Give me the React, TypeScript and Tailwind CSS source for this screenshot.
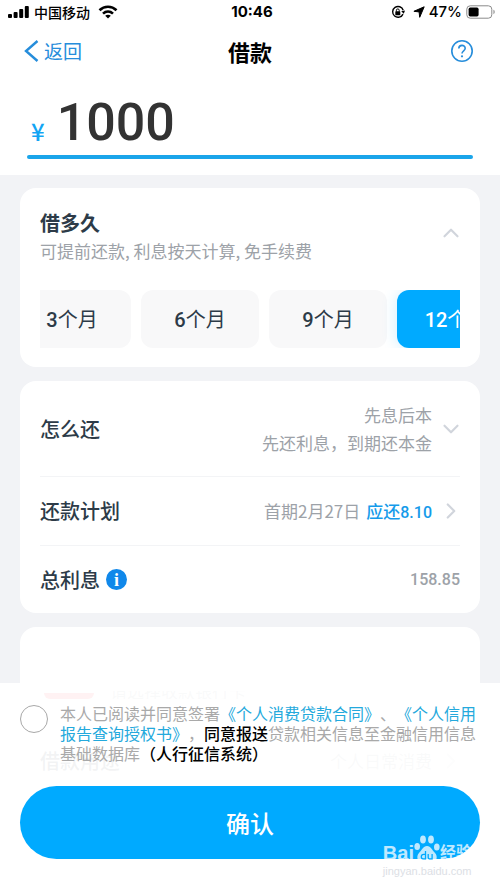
import React, { useState } from "react";
import { ChevronDown, ChevronRight, ChevronUp } from "lucide-react";

const terms = ["3", "6", "9", "12"];

function StatusBar() {
	return (
		<div className="flex h-6 items-center justify-between pl-2 pr-1 text-black">
			<div className="flex flex-1 items-center gap-1">
				<svg width="22" height="14" viewBox="0 0 22 14" fill="currentColor">
					<rect x="0" y="9" width="4" height="4" rx="1" />
					<rect x="5.6" y="7" width="4" height="6" rx="1" />
					<rect x="11.2" y="4" width="4" height="9" rx="1" />
					<rect x="16.8" y="1" width="4" height="12" rx="1" />
				</svg>
				<span className="text-sm font-medium">中国移动</span>
				<svg className="ml-1" width="20" height="14" viewBox="0 0 20 14" fill="none" stroke="currentColor" strokeWidth="2.6">
					<path d="M1.5 5.2C6.3.5 13.7.5 18.5 5.2" />
					<path d="M5 8.6c2.9-2.7 7.1-2.7 10 0" />
					<path d="M10 13.5 7.2 10.8c1.6-1.4 4-1.4 5.6 0z" fill="currentColor" stroke="none" />
				</svg>
			</div>
			<span className="font-[Inter] text-[15px] font-bold">10:46</span>
			<div className="flex flex-1 items-center justify-end gap-1">
				<svg className="mr-1" width="14" height="14" viewBox="0 0 14 14" fill="none" stroke="currentColor" strokeWidth="1.4">
					<path d="M12.2 5.2A5.4 5.4 0 1 0 12 9.1" />
					<path d="m10.2 6.3 2.6 2.4L14 5.4z" fill="currentColor" stroke="none" />
					<rect x="4.3" y="6.3" width="5" height="3.9" rx=".6" fill="currentColor" stroke="none" />
					<path d="M5.4 6.6V5.3a1.4 1.4 0 0 1 2.8 0v1.3" strokeWidth="1" />
				</svg>
				<svg width="12" height="12" viewBox="0 0 12 12" fill="currentColor" stroke="currentColor" strokeLinejoin="round">
					<path d="M11.2.8.9 5.3l5.2.6.6 5.4z" />
				</svg>
				<span className="font-[Inter] text-[15px] font-medium">47%</span>
				<svg width="30" height="14" viewBox="0 0 30 14">
					<rect x=".8" y=".8" width="25" height="12.4" rx="3.4" fill="none" stroke="#8b8b8b" />
					<rect x="2.6" y="2.6" width="10" height="8.8" rx="1.6" fill="#000" />
					<path d="M27.4 4.8c1.8.6 1.8 3.8 0 4.4z" fill="#999" />
				</svg>
			</div>
		</div>
	);
}

function Watermark() {
	return (
		<div className="pointer-events-none absolute bottom-[10px] right-7 font-['Liberation_Sans','Noto_Sans_CJK_SC',sans-serif] text-white opacity-75">
			<div className="flex items-end text-xl font-bold leading-5">
				<span>Bai</span>
				<svg width="26" height="28" viewBox="0 0 26 28" fill="currentColor">
					<ellipse cx="3.2" cy="11.5" rx="2.8" ry="3.6" />
					<ellipse cx="9" cy="4.6" rx="2.9" ry="4" />
					<ellipse cx="17" cy="4.6" rx="2.9" ry="4" />
					<ellipse cx="22.8" cy="12" rx="2.8" ry="3.6" />
					<path d="M13 11c-4 0-5 4-8 7s-2 9 3 9c2 0 3-.6 5-.6s3 .6 5 .6c5 0 6-6 3-9s-4-7-8-7z" />
					<g fill="none" stroke="#00aaff" strokeWidth="1.3">
						<path d="M11.5 16v8H9.6a2 2 0 0 1 0-4.6h1.9" />
						<path d="M14.2 19v3.6c0 .9.4 1.4 1.3 1.4h2.6v-5" />
					</g>
				</svg>
				<span className="text-base leading-5">经验</span>
			</div>
			<div className="text-[11px] leading-4 text-gray-300">jingyan.baidu.com</div>
		</div>
	);
}

export default function App() {
	const [term, setTerm] = useState("12");
	const [amount, setAmount] = useState("1000");
	const [agreed, setAgreed] = useState(false);

	return (
		<div className="relative h-screen overflow-hidden bg-[#f2f3f6] font-['Noto_Sans_CJK_SC',sans-serif] text-[#2d3b48]">
			{/* Header and amount */}
			<header className="bg-white">
				<StatusBar />
				<div className="flex h-[54px] items-center justify-between px-6 text-[#268ddb]">
					<button className="flex flex-1 items-center gap-1 text-[19px]">
						<svg width="16" height="22" viewBox="0 0 16 22" fill="none" stroke="currentColor" strokeWidth="2.4">
							<path d="M13.5 1 2 11l11.5 10" />
						</svg>
						返回
					</button>
					<h1 className="text-[22px] font-bold text-black">借款</h1>
					<div className="flex flex-1 justify-end">
						<button aria-label="帮助">
							<svg width="26" height="24" viewBox="0 0 26 24" fill="none" stroke="currentColor" strokeWidth="1.6">
								<circle cx="12" cy="12" r="10.2" />
								<path d="M8.8 9.6c0-4.4 6.4-4.2 6.4-.3 0 2.6-3.2 2.5-3.2 5.3" />
								<circle cx="12" cy="17.3" r="1.1" fill="currentColor" stroke="none" />
							</svg>
						</button>
					</div>
				</div>
				<div className="px-[27px] pb-4">
					<label className="flex h-[77px] items-center gap-3 pl-1 pt-3">
						<span className="pt-4 text-2xl font-medium text-[#12a5f4]">¥</span>
						<input
							aria-label="借款金额"
							value={amount}
							onChange={(e) => setAmount(e.target.value)}
							className="w-full min-w-0 bg-transparent font-[Roboto] text-[52px] font-medium leading-none text-[#333] outline-none"
						/>
					</label>
					<div className="h-1 rounded-full bg-[#1aa5ea]" />
				</div>
			</header>

			<main className="flex flex-col gap-[14px] px-5 pt-[13px]">
				{/* Loan term */}
				<section className="rounded-2xl bg-white px-5 pb-[19px] pt-[21px]">
					<div className="flex items-center justify-between">
						<div>
							<h2 className="text-xl font-bold leading-7">借多久</h2>
							<p className="text-[17px] leading-7 text-[#9da2a8]">可提前还款, 利息按天计算, 免手续费</p>
						</div>
						<button aria-label="收起">
							<ChevronUp size={26} strokeWidth={2} className="-mr-1 -mt-2 text-gray-300" />
						</button>
					</div>
					<div className="mt-[25px] flex justify-end gap-[10px] overflow-hidden">
						{terms.map((t) => (
							<button
								key={t}
								onClick={() => setTerm(t)}
								className={`h-[58px] w-[118px] shrink-0 rounded-xl text-xl ${
									term === t ? "bg-[#00aaff] text-white shadow-[0_0_16px_#00aaff33]" : "bg-[#f8f8f9]"
								} ${t === "12" ? "-mr-[55px]" : ""}`}
							>
								<span className="font-[Roboto] font-medium">{t}</span>个月
							</button>
						))}
					</div>
				</section>

				{/* Repayment */}
				<section className="rounded-2xl bg-white px-5 text-[17px] text-[#9da2a8]">
					<div className="flex h-24 items-center border-b border-gray-100">
						<h2 className="flex-1 text-xl font-medium text-[#2d3b48]">怎么还</h2>
						<p className="text-right leading-7">
							先息后本
							<br />
							先还利息，到期还本金
						</p>
						<ChevronDown size={26} strokeWidth={2} className="-mr-1 ml-[6px] text-gray-300" />
					</div>
					<div className="flex h-[69px] items-center border-b border-gray-100">
						<h2 className="flex-1 text-xl font-medium text-[#2d3b48]">还款计划</h2>
						<span>首期2月27日</span>
						<span className="ml-[6px] font-medium text-[#159bea]">
							应还<span className="font-[Roboto] text-base">8.10</span>
						</span>
						<ChevronRight size={26} strokeWidth={2} className="-mr-1 ml-[6px] text-gray-300" />
					</div>
					<div className="flex h-[67px] items-center">
						<h2 className="text-xl font-medium text-[#2d3b48]">总利息</h2>
						<button aria-label="利息说明" className="ml-[6px] size-[21px] rounded-full bg-[#1088ea] font-['Liberation_Serif',serif] text-lg font-bold leading-5 text-white">
							i
						</button>
						<span className="flex-1 text-right font-[Roboto] text-base font-medium">158.85</span>
					</div>
				</section>

				{/* Purpose */}
				<section className="rounded-2xl bg-white px-5 pt-16">
					<div className="flex h-2 items-end gap-4 overflow-hidden pl-1">
						<span className="h-[6px] w-[50px] rounded-b-full bg-red-500" />
						<span className="text-[17px] leading-4 text-[#9da2a8]">请选择收款银行卡</span>
					</div>
					<div className="mt-[26px] flex h-[72px] items-center text-xl">
						<h2 className="flex-1 font-medium">借款用途</h2>
						<span className="text-[17px] text-[#9da2a8]">个人日常消费</span>
						<ChevronRight size={26} strokeWidth={2} className="-mr-1 ml-[6px] text-gray-300" />
					</div>
				</section>
			</main>

			{/* Agreement and confirm */}
			<footer className="absolute inset-x-0 bottom-0 bg-white/94 px-5 pb-[30px] pt-5">
				<div className="flex items-start">
					<input
						id="agree"
						type="checkbox"
						checked={agreed}
						onChange={(e) => setAgreed(e.target.checked)}
						className="mt-[2px] size-7 shrink-0 appearance-none rounded-full border border-[#a8a8a8] bg-white checked:bg-[#00aaff]"
					/>
					<label htmlFor="agree" className="ml-3 text-base leading-5 text-[#a9a9a9] [text-spacing-trim:space-all]">
						本人已阅读并同意签署<a href="#contract" className="text-[#24a9dc]">《个人消费贷款合同》</a>、
						<a href="#credit" className="text-[#24a9dc]">《个人信用报告查询授权书》</a>，
						<span className="font-medium text-black">同意报送</span>贷款相关信息至金融信用信息基础数据库
						<span className="font-medium text-black">（人行征信系统）</span>
					</label>
				</div>
				<button className="mt-[23px] h-[73px] w-full rounded-full bg-[#00aaff] text-2xl font-medium text-white">确认</button>
				<Watermark />
			</footer>
		</div>
	);
}
